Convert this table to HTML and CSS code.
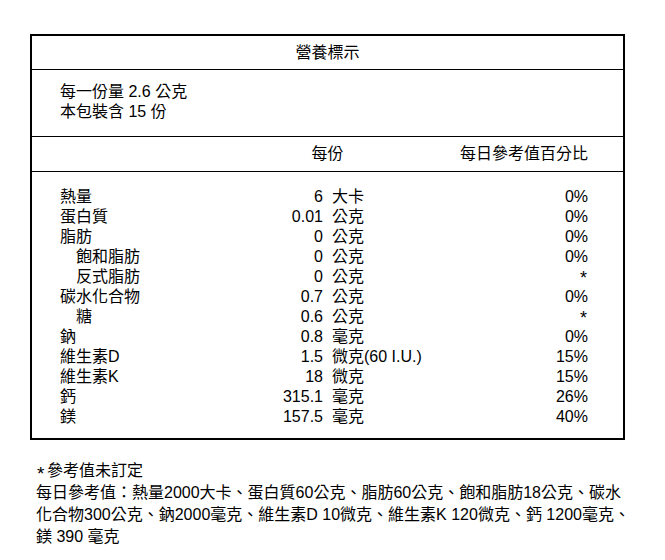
FILE: index.html
```html
<!DOCTYPE html>
<html lang="zh-Hant">
<head>
<meta charset="utf-8">
<title>營養標示</title>
<link rel="stylesheet" href="styles.css">
</head>
<body>
<div class="label">
  <div class="title">營養標示</div>
  <div class="serving">
    <div>每一份量 2.6 公克</div>
    <div>本包裝含 15 份</div>
  </div>
  <div class="head">
    <span></span>
    <span class="head-mid">每份</span>
    <span class="head-right">每日參考值百分比</span>
  </div>
  <div class="rows">
    <div class="row"><span class="name">熱量</span><span class="num">6</span><span class="unit">大卡</span><span class="pct">0%</span></div>
    <div class="row"><span class="name">蛋白質</span><span class="num">0.01</span><span class="unit">公克</span><span class="pct">0%</span></div>
    <div class="row"><span class="name">脂肪</span><span class="num">0</span><span class="unit">公克</span><span class="pct">0%</span></div>
    <div class="row"><span class="name sub">飽和脂肪</span><span class="num">0</span><span class="unit">公克</span><span class="pct">0%</span></div>
    <div class="row"><span class="name sub">反式脂肪</span><span class="num">0</span><span class="unit">公克</span><span class="pct"><span class="pct-star">*</span></span></div>
    <div class="row"><span class="name">碳水化合物</span><span class="num">0.7</span><span class="unit">公克</span><span class="pct">0%</span></div>
    <div class="row"><span class="name sub">糖</span><span class="num">0.6</span><span class="unit">公克</span><span class="pct"><span class="pct-star">*</span></span></div>
    <div class="row"><span class="name">鈉</span><span class="num">0.8</span><span class="unit">毫克</span><span class="pct">0%</span></div>
    <div class="row"><span class="name">維生素D</span><span class="num">1.5</span><span class="unit">微克(60 I.U.)</span><span class="pct">15%</span></div>
    <div class="row"><span class="name">維生素K</span><span class="num">18</span><span class="unit">微克</span><span class="pct">15%</span></div>
    <div class="row"><span class="name">鈣</span><span class="num">315.1</span><span class="unit">毫克</span><span class="pct">26%</span></div>
    <div class="row"><span class="name">鎂</span><span class="num">157.5</span><span class="unit">毫克</span><span class="pct">40%</span></div>
  </div>
</div>
<div class="notes">
  <div><span class="star">*</span>參考值未訂定</div>
  <div>每日參考值：熱量2000大卡、蛋白質60公克、脂肪60公克、飽和脂肪18公克、碳水<br>化合物300公克、鈉2000毫克、維生素D 10微克、維生素K 120微克、鈣 1200毫克、<br>鎂 390 毫克</div>
</div>
</body>
</html>
```

FILE: styles.css
```css
* { box-sizing: border-box; }

body {
  margin: 0;
  padding: 34px 0 0 30px;
  background: #fff;
  color: #000;
  font-family: "Liberation Sans", "Noto Sans CJK TC", sans-serif;
  font-size: 16px;
  line-height: 20px;
}

.label {
  width: 595px;
  border: 2px solid #000;
}

.title {
  text-align: center;
  padding: 7px 0 6px;
  border-bottom: 1px solid #000;
}

.serving {
  padding: 12px 28px 14px;
  border-bottom: 1px solid #000;
}

.head {
  display: grid;
  grid-template-columns: 1fr auto 1fr;
  padding: 7px 35px 7px 35px;
  border-bottom: 1px solid #000;
}

.head-right { text-align: right; }

.rows {
  padding: 15px 35px 11px 28px;
}

.row {
  display: grid;
  grid-template-columns: 140px 123px 1fr auto;
}

.name.sub { padding-left: 16px; }

.num { text-align: right; }

.unit { padding-left: 9px; }

.pct { text-align: right; }

.pct-star {
  display: inline-block;
  font-size: 18px;
  line-height: 0;
  vertical-align: -2px;
  padding-right: 1px;
}

.notes {
  margin-top: 20px;
  padding-left: 6px;
  line-height: 22px;
}

.star {
  display: inline-block;
  width: 11px;
  padding-left: 1px;
  font-size: 19px;
  line-height: 0;
  vertical-align: -4px;
}
```
